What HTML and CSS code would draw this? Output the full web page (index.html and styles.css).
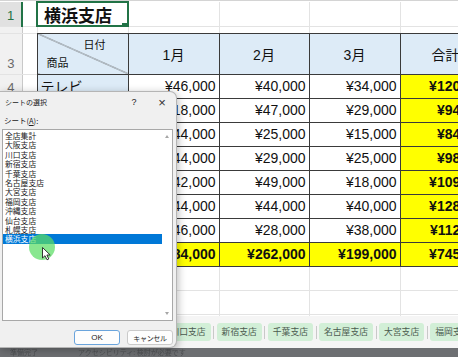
FILE: index.html
```html
<!DOCTYPE html>
<html lang="ja">
<head>
<meta charset="utf-8">
<title>横浜支店</title>
<link rel="stylesheet" href="styles.css">
</head>
<body>
<div class="grid">
	<table class="sheet">
		<colgroup>
			<col class="c-rh"><col class="c-a0"><col class="c-a"><col class="c-b"><col class="c-c"><col class="c-d"><col class="c-e">
		</colgroup>
		<tr class="r1">
			<th class="rh sel">1</th><td></td>
			<td class="active"><div class="title">横浜支店<span class="handle"></span></div></td>
			<td></td><td></td><td></td><td></td>
		</tr>
		<tr class="r2"><th class="rh"></th><td></td><td></td><td></td><td></td><td></td><td></td></tr>
		<tr class="r3">
			<th class="rh">3</th><td></td>
			<td class="b hd diag"><div class="corner"><span class="date">日付</span><span class="goods">商品</span></div></td>
			<td class="b hd">1月</td><td class="b hd">2月</td><td class="b hd">3月</td><td class="b hd">合計</td>
		</tr>
		<tr><th class="rh">4</th><td></td><td class="b item">テレビ</td><td class="b n">¥46,000</td><td class="b n">¥40,000</td><td class="b n">¥34,000</td><td class="b n sum">¥120,000</td></tr>
		<tr><th class="rh">5</th><td></td><td class="b item">冷蔵庫</td><td class="b n">¥18,000</td><td class="b n">¥47,000</td><td class="b n">¥29,000</td><td class="b n sum">¥94,000</td></tr>
		<tr><th class="rh">6</th><td></td><td class="b item">洗濯機</td><td class="b n">¥44,000</td><td class="b n">¥25,000</td><td class="b n">¥15,000</td><td class="b n sum">¥84,000</td></tr>
		<tr><th class="rh">7</th><td></td><td class="b item">エアコン</td><td class="b n">¥44,000</td><td class="b n">¥29,000</td><td class="b n">¥25,000</td><td class="b n sum">¥98,000</td></tr>
		<tr><th class="rh">8</th><td></td><td class="b item">掃除機</td><td class="b n">¥42,000</td><td class="b n">¥49,000</td><td class="b n">¥18,000</td><td class="b n sum">¥109,000</td></tr>
		<tr><th class="rh">9</th><td></td><td class="b item">パソコン</td><td class="b n">¥44,000</td><td class="b n">¥44,000</td><td class="b n">¥40,000</td><td class="b n sum">¥128,000</td></tr>
		<tr><th class="rh">10</th><td></td><td class="b item">電子レンジ</td><td class="b n">¥46,000</td><td class="b n">¥28,000</td><td class="b n">¥38,000</td><td class="b n sum">¥112,000</td></tr>
		<tr><th class="rh">11</th><td></td><td class="b item sum">合計</td><td class="b n sum">¥284,000</td><td class="b n sum">¥262,000</td><td class="b n sum">¥199,000</td><td class="b n sum">¥745,000</td></tr>
		<tr><th class="rh">12</th><td></td><td></td><td></td><td></td><td></td><td></td></tr>
		<tr><th class="rh">13</th><td></td><td></td><td></td><td></td><td></td><td></td></tr>
		<tr><th class="rh">14</th><td></td><td></td><td></td><td></td><td></td><td></td></tr>
	</table>
</div>

<div class="tabs">
	<span class="tab">全店集計</span><span class="sep"></span>
	<span class="tab">大阪支店</span><span class="sep"></span>
	<span class="tab">川口支店</span><span class="sep"></span>
	<span class="tab">新宿支店</span><span class="sep"></span>
	<span class="tab">千葉支店</span><span class="sep"></span>
	<span class="tab">名古屋支店</span><span class="sep"></span>
	<span class="tab">大宮支店</span><span class="sep"></span>
	<span class="tab">福岡支店</span><span class="sep"></span>
	<span class="tab">沖縄支店</span>
</div>
<div class="status"><span>準備完了</span><span>アクセシビリティ: 検討が必要です</span></div>

<div class="dialog">
	<div class="dlg-title">
		<span class="dlg-name">シートの選択</span>
		<span class="dlg-help">?</span>
		<span class="dlg-close">×</span>
	</div>
	<div class="dlg-label">シート(<u>A</u>):</div>
	<div class="listbox">
		<ul class="items">
			<li>全店集計</li>
			<li>大阪支店</li>
			<li>川口支店</li>
			<li>新宿支店</li>
			<li>千葉支店</li>
			<li>名古屋支店</li>
			<li>大宮支店</li>
			<li>福岡支店</li>
			<li>沖縄支店</li>
			<li>仙台支店</li>
			<li>札幌支店</li>
			<li class="selected">横浜支店</li>
		</ul>
		<div class="vscroll"><span class="arrow up"></span><span class="arrow down"></span></div>
	</div>
	<div class="dlg-buttons">
		<button class="btn default">OK</button>
		<button class="btn">キャンセル</button>
	</div>
</div>

<div class="click"></div>
<svg class="cursor" width="10" height="14" viewBox="0 0 10 14">
	<path d="M0.5 0.5 L0.5 11 L3 8.7 L5 12.8 L6.8 12 L4.9 8 L8.2 8 Z" fill="#fff" stroke="#222" stroke-width="0.9" stroke-linejoin="round"/>
</svg>
</body>
</html>
```

FILE: styles.css
```css
body{
	margin:0;
	width:458px;
	height:357px;
	overflow:hidden;
	position:relative;
	background-color:#fff;
	font-family:"Liberation Sans", "Noto Sans CJK JP", sans-serif;
	color:#111;
}

/* sheet */
div.grid{
	height:316px;
	overflow:hidden;
	border-top:1px solid #d4d4d4;
	box-sizing:border-box;
}
table.sheet{
	border-collapse:collapse;
	table-layout:fixed;
	width:491px;
}
col.c-rh{ width:22px; border-right:1px solid #c9c9c9; }
col.c-a0{ width:15px; border-right:1px solid #e3e3e3; }
col.c-a{ width:91px; border-right:1px solid #e3e3e3; }
col.c-b{ width:91px; border-right:1px solid #e3e3e3; }
col.c-c{ width:90px; border-right:1px solid #e3e3e3; }
col.c-d{ width:91px; border-right:1px solid #e3e3e3; }
col.c-e{ width:91px; border-right:1px solid #e3e3e3; }
table.sheet tr{
	height:24px;
	border-bottom:1px solid #e3e3e3;
}
table.sheet tr.r1{ height:24px; }
table.sheet tr.r2{ height:7px; }
table.sheet tr.r3{ height:41px; }
table.sheet td{
	padding:0 3px;
	font-size:14px;
	white-space:nowrap;
	overflow:hidden;
}
th.rh{
	background-color:#f1f1f1;
	color:#6a6a6a;
	font-weight:normal;
	font-size:13px;
	text-align:center;
	vertical-align:bottom;
	padding:0 0 3px 0;
}
th.rh.sel{
	background-color:#e1e1e1;
	color:#217346;
	border-right:2px solid #217346;
}
td.active{
	border:2px solid #217346;
	padding:0;
	overflow:visible;
}
div.title{
	position:relative;
	padding-left:3px;
	font-family:"Noto Sans CJK JP", sans-serif;
	font-weight:bold;
	font-size:17px;
	line-height:21px;
}
span.handle{
	position:absolute;
	right:-4px;
	bottom:-4px;
	width:5px;
	height:5px;
	background-color:#217346;
	border:1px solid #fff;
}
td.b{
	border:1px solid #3a3a3a;
}
td.hd{
	background-color:#ddebf7;
	text-align:center;
	font-size:14px;
}
td.diag{
	padding:0;
	background:linear-gradient(to top right, #ddebf7 calc(50% - 0.6px), #555 50%, #ddebf7 calc(50% + 0.6px));
}
div.corner{
	display:flex;
	flex-direction:column;
	justify-content:space-between;
	height:31px;
	padding:4px 19px 5px 6px;
	font-family:"Noto Sans CJK JP", sans-serif;
	font-size:11px;
	line-height:13px;
}
span.date{ align-self:flex-end; }
span.goods{ align-self:flex-start; }
td.item{
	background-color:#ddebf7;
	font-family:"Noto Sans CJK JP", sans-serif;
	padding-left:4px;
}
td.n{
	text-align:right;
	padding-right:2px;
}
td.sum{
	background-color:#ffff00;
	font-weight:bold;
}

/* sheet tabs */
div.tabs{
	display:flex;
	align-items:center;
	height:32px;
	padding:0 0 0 63px;
	background-color:#f5f5f5;
	box-sizing:border-box;
}
span.tab{
	flex:none;
	padding:0 5px;
	height:18px;
	line-height:18px;
	background-color:#d2efd7;
	color:#4b5a4f;
	font-family:"Noto Sans CJK JP", sans-serif;
	font-size:8.8px;
	border-radius:3px;
}
span.sep{
	flex:none;
	width:1px;
	height:13px;
	margin:0 2.5px;
	background-color:#c9c9c9;
}
div.status{
	display:flex;
	gap:40px;
	height:9px;
	padding-left:10px;
	background-color:#6d6f72;
	color:#4e5053;
	font-family:"Noto Sans CJK JP", sans-serif;
	font-size:7px;
	line-height:9px;
	overflow:hidden;
}
div.status span{
	filter:blur(0.6px);
}

/* dialog */
div.dialog{
	position:absolute;
	left:0;
	top:91px;
	width:177px;
	height:257px;
	box-sizing:border-box;
	display:flex;
	flex-direction:column;
	background-color:#f0f0f0;
	border:1px solid #b5b5b5;
	border-left:none;
	border-radius:0 7px 7px 0;
	box-shadow:1px 2px 8px rgba(0,0,0,0.28);
	font-family:"Noto Sans CJK JP", sans-serif;
	color:#222;
}
div.dlg-title{
	display:flex;
	align-items:center;
	height:20px;
	padding-left:5px;
	font-size:7px;
}
span.dlg-name{ flex:1; }
span.dlg-help{
	width:28px;
	text-align:center;
	font-family:"Liberation Sans", sans-serif;
	font-size:9px;
}
span.dlg-close{
	width:28px;
	text-align:center;
	font-family:"Liberation Sans", sans-serif;
	font-size:13px;
	font-weight:lighter;
	color:#333;
}
div.dlg-label{
	margin-top:4px;
	padding-left:4px;
	height:10px;
	line-height:10px;
	font-size:7.5px;
}
div.listbox{
	display:flex;
	margin:3px 3px 0 2px;
	height:192px;
	box-sizing:border-box;
	border:1px solid #a8a8a8;
	background-color:#fff;
}
ul.items{
	flex:1;
	list-style:none;
	margin:0;
	padding:1px 0 0 0;
}
ul.items li{
	height:9.4px;
	line-height:9.4px;
	padding-left:2px;
	font-size:7.8px;
	color:#1a1a1a;
}
ul.items li.selected{
	background-color:#0078d7;
	color:#fff;
}
div.vscroll{
	position:relative;
	width:10px;
}
span.arrow{
	position:absolute;
	left:3px;
	width:0;
	height:0;
	border-left:2.5px solid transparent;
	border-right:2.5px solid transparent;
}
span.arrow.up{
	top:5px;
	border-bottom:3px solid #a6a6a6;
}
span.arrow.down{
	bottom:5px;
	border-top:3px solid #a6a6a6;
}
div.dlg-buttons{
	display:flex;
	justify-content:flex-end;
	gap:7px;
	margin:9px 3px 0 0;
}
button.btn{
	width:46px;
	height:15px;
	padding:0;
	background-color:#fdfdfd;
	border:1px solid #cacaca;
	border-radius:3px;
	font-family:"Noto Sans CJK JP", sans-serif;
	font-size:7px;
	letter-spacing:-0.3px;
	color:#222;
}
button.btn.default{
	border-color:#6aa4dc;
	font-family:"Liberation Sans", sans-serif;
	font-size:8px;
	letter-spacing:0;
}

/* mouse */
div.click{
	position:absolute;
	left:29px;
	top:234px;
	width:26px;
	height:26px;
	border-radius:50%;
	background-color:rgba(90,222,100,0.72);
}
svg.cursor{
	position:absolute;
	left:42px;
	top:247px;
}
```
